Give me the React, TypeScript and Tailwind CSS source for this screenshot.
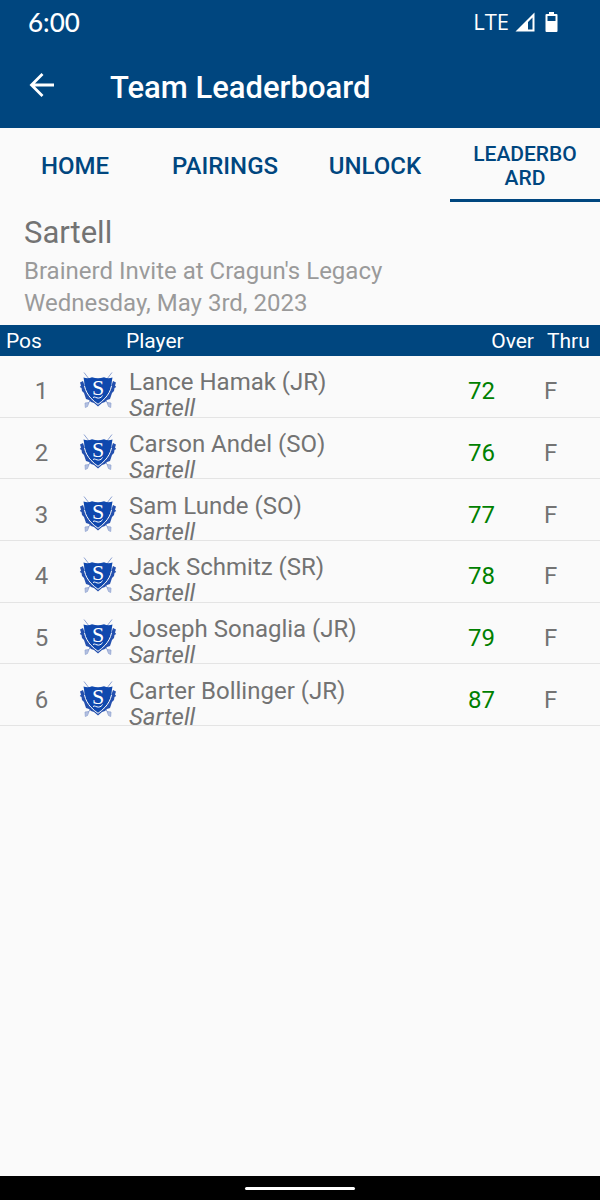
const tabs = [
  { label: "HOME", href: "#home" },
  { label: "PAIRINGS", href: "#pairings" },
  { label: "UNLOCK", href: "#unlock" },
  { label: "LEADERBOARD", href: "#leaderboard", active: true },
];

const players = [
  { pos: 1, name: "Lance Hamak (JR)", team: "Sartell", over: 72, thru: "F" },
  { pos: 2, name: "Carson Andel (SO)", team: "Sartell", over: 76, thru: "F" },
  { pos: 3, name: "Sam Lunde (SO)", team: "Sartell", over: 77, thru: "F" },
  { pos: 4, name: "Jack Schmitz (SR)", team: "Sartell", over: 78, thru: "F" },
  { pos: 5, name: "Joseph Sonaglia (JR)", team: "Sartell", over: 79, thru: "F" },
  { pos: 6, name: "Carter Bollinger (JR)", team: "Sartell", over: 87, thru: "F" },
];

function TeamCrest() {
  return (
    <svg viewBox="0 0 38 38" className="block w-[38px] h-[38px]" aria-hidden="true">
      {/* crossed swords */}
      <g stroke="#8fa3d2" strokeWidth="1" fill="none">
        <path d="M5 1.500 31 35M33 1.500 7 35" />
      </g>
      <g fill="#b4c0e0" stroke="#8da0d0" strokeWidth="0.7">
        <path d="M6 32l4-.5-1.500 4-2.200 1z" />
        <path d="M32 32l-4-.5 1.500 4 2.200 1z" />
      </g>
      {/* ribbon on both sides */}
      <g fill="#2450ae">
        <path d="M4 10 1 11.500l1 3L.8 16l1.700 1 .5 3 2 2L7 28l3 1 2 2 3 1 4 3.500V32l-6-4-4-5-3-7z" />
        <path d="M34 10l3 1.500-1 3 1.200 1.500-1.700 1-.5 3-2 2L31 28l-3 1-2 2-3 1-4 3.500V32l6-4 4-5 3-7z" />
      </g>
      {/* shield */}
      <path
        d="M4.500 6.500c3 1 6 .8 8.500-.2 2 .7 4 1 6 1s4-.3 6-1c2.500 1 5.500 1.200 8.500.2-1 4-.7 8-2 12C29.500 24 25 29 19 33 13 29 8.500 24 6.500 18.500c-1.300-4-1-8-2-12z"
        fill="#0f48ae"
      />
      <path
        d="M5.500 15c1 5 3.500 9 6.500 12.300 2 2.200 4.500 4.200 7 6 2.500-1.800 5-3.800 7-6 3-3.300 5.500-7.300 6.500-12.300"
        stroke="#fafafa"
        strokeWidth="1"
        fill="none"
      />
      <text
        x="19"
        y="24"
        textAnchor="middle"
        fontSize="22"
        fill="#fff"
        className="font-['Liberation_Serif',serif]"
      >
        S
      </text>
      <path d="M14 26.500c1.500-1.500 3.500.8 5.500.6 2-.2 3.500-1.300 4-2.600" stroke="#fff" strokeWidth="1" fill="none" />
    </svg>
  );
}

function StatusBar() {
  return (
    <div className="flex items-center justify-between h-11 pl-7 pr-[42px]">
      <span className="font-[Lato,sans-serif] text-[26px] leading-10 font-medium">6:00</span>
      <div className="flex items-center">
        <span className="pb-[2px] font-['Open_Sans',sans-serif] text-[22px] leading-5 font-medium">LTE</span>
        <svg viewBox="0 0 20 20" className="w-5 h-5 ml-[6px]" aria-label="Signal">
          <path d="M19.500.5v19H.5zM17.500 5.500 13 10v7.500h4.500z" fill="#fff" fillRule="evenodd" />
        </svg>
        <svg viewBox="0 0 13 20" className="w-[13px] h-5 ml-[10px]" aria-label="Battery">
          <path
            d="M4 0h5v2h2.500q1 0 1 1v16q0 1-1 1h-10q-1 0-1-1V3q0-1 1-1H4zM2.500 4v5h8V4z"
            fill="#fff"
            fillRule="evenodd"
          />
        </svg>
      </div>
    </div>
  );
}

export default function App() {
  return (
    <div className="flex flex-col min-h-screen bg-[#fafafa] font-[Roboto,sans-serif] text-[#737373]">
      <header className="bg-[#00467f] text-white">
        <StatusBar />
        <div className="flex items-center h-[84px] pl-7 gap-[54px]">
          <button type="button" aria-label="Back">
            <svg viewBox="0 0 28 28" className="block w-7 h-7" fill="none" stroke="#fff" strokeWidth="2.800">
              <path d="M26 13H4M14.500 2 3.500 13l11 11" />
            </svg>
          </button>
          <h1 className="pt-1 text-[31px] leading-9 font-medium">Team Leaderboard</h1>
        </div>
      </header>

      <nav className="grid grid-cols-4 h-[74px] text-[#00467f] font-medium text-center">
        {tabs.map((tab) => (
          <a
            key={tab.label}
            href={tab.href}
            aria-current={tab.active ? "page" : undefined}
            className={
              tab.active
                ? "flex items-center justify-center px-[22px] pt-1 border-b-3 border-[#00467f] text-[21px] leading-6 break-all"
                : "flex items-center justify-center pt-[2px] text-2xl"
            }
          >
            {tab.label}
          </a>
        ))}
      </nav>

      <main className="flex-1">
        <section className="px-6 pt-[11px] pb-[6px] text-2xl text-[#9a9a9a]">
          <h2 className="pb-[2px] text-[31px] leading-10 text-[#737373]">Sartell</h2>
          <p className="leading-8">Brainerd Invite at Cragun&apos;s Legacy</p>
          <p className="leading-8">Wednesday, May 3rd, 2023</p>
        </section>

        <table className="w-full h-[401px] table-fixed border-collapse text-left">
          <colgroup>
            <col className="w-[79px]" />
            <col className="w-12" />
            <col />
            <col className="w-[73px]" />
            <col className="w-[59px]" />
          </colgroup>
          <thead className="bg-[#00467f] text-white text-[21px] leading-[30px]">
            <tr className="h-[31px]">
              <th scope="col" className="pt-px pl-[6px] font-normal">Pos</th>
              <th scope="col" colSpan={2} className="pt-px pl-[47px] font-normal">Player</th>
              <th scope="col" className="pt-px pr-[7px] font-normal text-right">Over</th>
              <th scope="col" className="pt-px pl-[6px] font-normal">Thru</th>
            </tr>
          </thead>
          <tbody className="text-2xl">
            {players.map((player) => (
              <tr key={player.pos} className="border-b border-[#e4e4e4]">
                <td className="pt-[10px] pl-1 text-center">{player.pos}</td>
                <td className="pt-2">
                  <TeamCrest />
                </td>
                <td className="pt-2 pl-[2px]">
                  <div className="leading-9">{player.name}</div>
                  <div className="leading-4 italic">{player.team}</div>
                </td>
                <td className="pt-[10px] text-[#008000]">{player.over}</td>
                <td className="pt-[10px] pl-[3px]">{player.thru}</td>
              </tr>
            ))}
          </tbody>
        </table>
      </main>

      <footer className="flex items-center justify-center h-6 bg-black">
        <div className="w-[110px] h-[3px] rounded-full bg-white" />
      </footer>
    </div>
  );
}
